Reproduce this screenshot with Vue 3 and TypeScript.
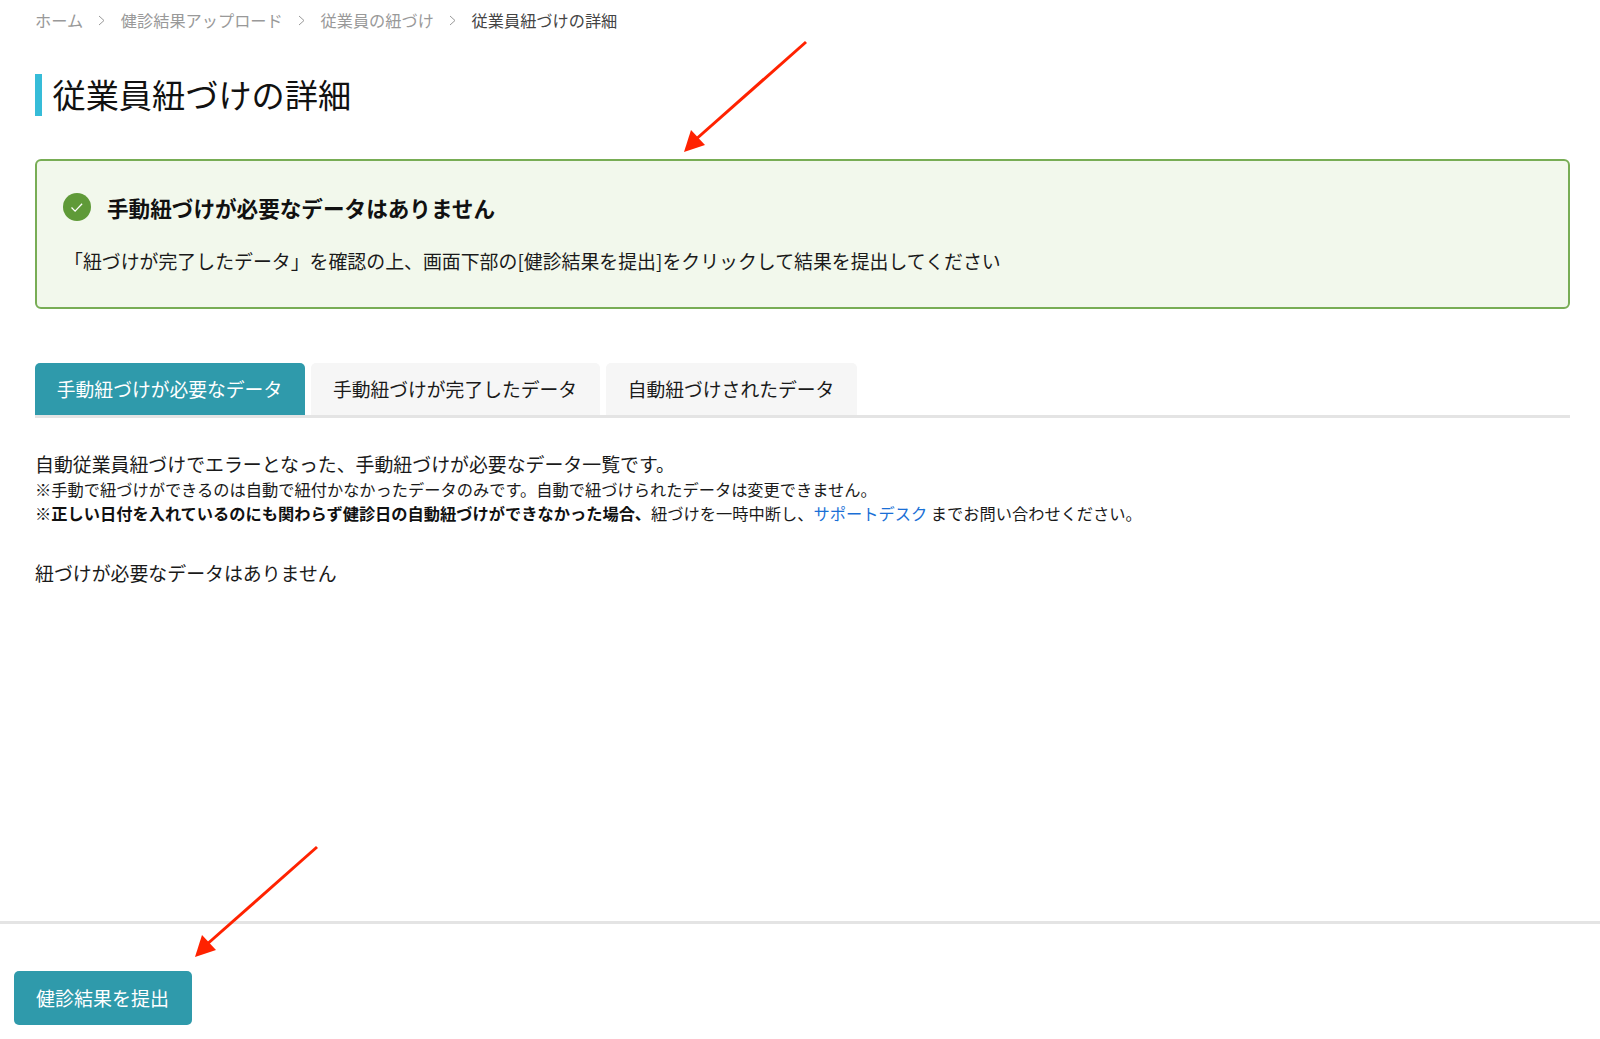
<script setup lang="ts">
const crumbs: string[] = ['ホーム', '健診結果アップロード', '従業員の紐づけ']
const tabs: string[] = ['手動紐づけが必要なデータ', '手動紐づけが完了したデータ', '自動紐づけされたデータ']
</script>

<template>
  <div class="page">
    <main class="main">
      <nav class="crumbs">
        <template v-for="c in crumbs" :key="c">
          <span class="crumb">{{ c }}</span>
          <svg class="sep" width="7" height="11" viewBox="0 0 7 11"><path d="M1 1l5 4.5L1 10" fill="none" stroke="#999" stroke-width="1" /></svg>
        </template>
        <span class="crumb current">従業員紐づけの詳細</span>
      </nav>

      <h1 class="title">従業員紐づけの詳細</h1>

      <section class="alert">
        <div class="alert-head">
          <svg class="check" width="28" height="28" viewBox="0 0 28 28">
            <circle cx="14" cy="14" r="14" fill="#5f9a38" />
            <path d="M8.5 14.5l3.6 3.6 7-7.4" fill="none" stroke="#fff" stroke-width="1.3" />
          </svg>
          <strong>手動紐づけが必要なデータはありません</strong>
        </div>
        <p class="alert-body">「紐づけが完了したデータ」を確認の上、画面下部の[健診結果を提出]をクリックして結果を提出してください</p>
      </section>

      <div class="tabs">
        <button v-for="(t, i) in tabs" :key="t" class="tab" :class="{ active: i === 0 }">{{ t }}</button>
      </div>

      <p class="lead">自動従業員紐づけでエラーとなった、手動紐づけが必要なデータ一覧です。</p>
      <p class="note">※手動で紐づけができるのは自動で紐付かなかったデータのみです。自動で紐づけられたデータは変更できません。</p>
      <p class="note"><strong>※正しい日付を入れているのにも関わらず健診日の自動紐づけができなかった場合、</strong>紐づけを一時中断し、<a class="link">サポートデスク</a> までお問い合わせください。</p>
      <p class="empty">紐づけが必要なデータはありません</p>
    </main>

    <footer class="footer">
      <button class="submit">健診結果を提出</button>
    </footer>

    <svg class="arrow arrow-top" width="130" height="116" viewBox="0 0 130 116">
      <path d="M126 2L14 101" stroke="#ff2200" stroke-width="3" fill="none" />
      <path d="M4 112L11 90L25 105Z" fill="#ff2200" />
    </svg>
    <svg class="arrow arrow-bottom" width="130" height="116" viewBox="0 0 130 116">
      <path d="M126 2L14 101" stroke="#ff2200" stroke-width="3" fill="none" />
      <path d="M4 112L11 90L25 105Z" fill="#ff2200" />
    </svg>
  </div>
</template>

<style>
html, body { margin: 0; background: #fff; }
</style>

<style scoped>
.page {
  position: relative;
  height: 1039px;
  display: flex;
  flex-direction: column;
  font-family: "Noto Sans CJK JP", "Noto Sans", sans-serif;
  color: #1a1a1a;
  overflow: hidden;
}
.main { flex: 1; padding: 8px 30px 0 35px; }
.crumbs { display: flex; align-items: center; height: 24px; font-size: 16.2px; color: #999; }
.crumb { white-space: nowrap; }
.current { color: #444; }
.sep { margin: 0 15.4px; flex: none; }
.title {
  margin: 42px 0 0;
  height: 42px;
  line-height: 39px;
  padding-left: 10.5px;
  border-left: 7px solid #36bcd8;
  font-size: 33.2px;
  font-weight: 400;
  color: #111;
}
.alert {
  margin-top: 43px;
  height: 150px;
  box-sizing: border-box;
  border: 2px solid #78ad55;
  border-radius: 6px;
  background: #f2f8ec;
  padding: 31px 26px 0;
}
.alert-head { display: flex; align-items: center; height: 32px; }
.check { flex: none; margin-right: 16px; margin-top: -3px; }
.alert-head strong { font-size: 21.6px; font-weight: 700; color: #111; position: relative; top: -1px; }
.alert-body { margin: 22px 0 0 1px; font-size: 18.9px; line-height: 30px; white-space: nowrap; }
.tabs {
  display: flex;
  gap: 6px;
  margin-top: 54px;
  height: 55px;
  box-sizing: border-box;
  border-bottom: 3px solid #e4e4e4;
}
.tab {
  border: 0;
  padding: 0 1px 2px 0;
  width: 270px;
  height: 52px;
  border-radius: 5px 5px 0 0;
  background: #f6f6f6;
  color: #1a1a1a;
  font: inherit;
  font-size: 18.8px;
}
.tab:nth-child(2) { width: 289px; }
.tab:nth-child(3) { width: 251px; }
.tab.active { background: #2f9aab; color: #fff; }
p { margin: 0; }
.lead { margin-top: 32px; font-size: 18.9px; line-height: 27px; }
.note { font-size: 16.24px; line-height: 24px; white-space: nowrap; }
.note strong { font-weight: 700; color: #111; }
.link { color: #1a6fd6; }
.empty { margin-top: 34px; font-size: 18.9px; line-height: 28px; }
.footer {
  flex: none;
  height: 118px;
  box-sizing: border-box;
  border-top: 3px solid #e4e4e4;
  padding: 47px 0 0 13.5px;
}
.submit {
  display: block;
  width: 178px;
  height: 54px;
  border: 0;
  border-radius: 5px;
  background: #2f9aab;
  color: #fff;
  font: inherit;
  font-size: 19px;
  padding: 0 0 1px;
}
.arrow { position: absolute; }
.arrow-top { left: 680px; top: 40px; }
.arrow-bottom { left: 191px; top: 845px; }
</style>
